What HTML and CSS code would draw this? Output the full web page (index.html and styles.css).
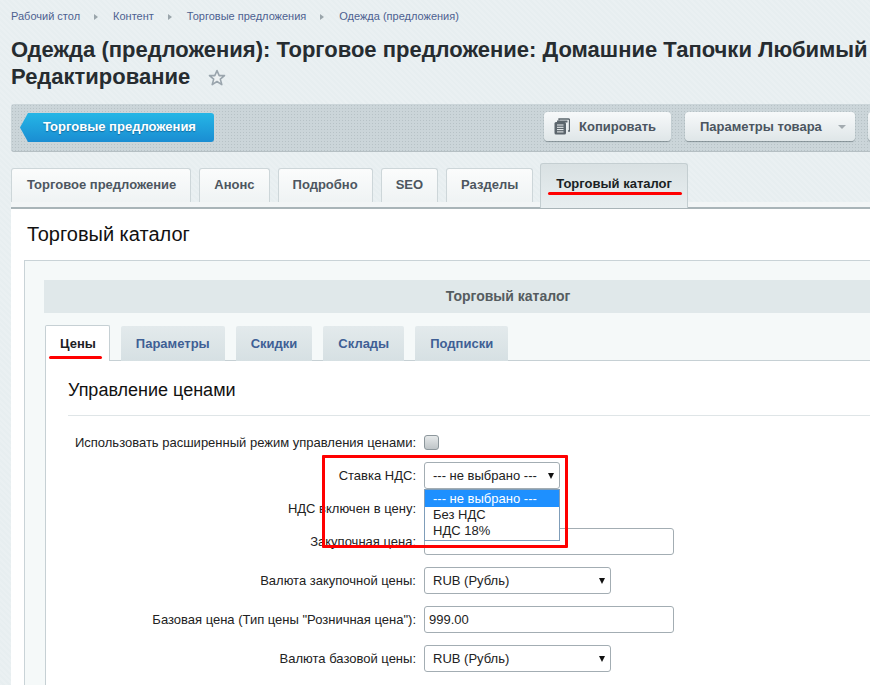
FILE: index.html
```html
<!DOCTYPE html>
<html lang="ru">
<head>
    <meta charset="UTF-8">
    <title>Одежда (предложения)</title>
    <link rel="stylesheet" href="styles.css">
</head>
<body>
    <div class="page">
        <div class="breadcrumbs">
            <a>Рабочий стол</a><i class="crumb-arrow"></i>
            <a>Контент</a><i class="crumb-arrow"></i>
            <a>Торговые предложения</a><i class="crumb-arrow"></i>
            <a>Одежда (предложения)</a>
        </div>

        <h1 class="title">
            <span class="title-line">Одежда (предложения): Торговое предложение: Домашние Тапочки Любимый</span>
            <span class="title-line">Редактирование
                <svg class="star" width="18" height="18" viewBox="0 0 18 18"><path d="M9 1.600l2.200 5h5.300l-4.200 3.500 1.500 5.500L9 12.500l-4.800 3.100 1.500-5.500L1.500 6.600h5.300z" fill="#eef2f3" stroke="#9aa5ad" stroke-width="1.600" stroke-linejoin="round"/></svg>
            </span>
        </h1>

        <div class="toolbar">
            <a class="back-btn">Торговые предложения</a>
            <a class="tool-btn copy-btn">
                <svg width="16" height="17" viewBox="0 0 16 17"><path d="M5 2.500V1h9.500a1 1 0 0 1 1 1v11h-1.500" fill="none" stroke="#5b656c" stroke-width="1.300"/><rect x="3" y="2.500" width="10.500" height="2" fill="#5b656c"/><rect x="0.500" y="4" width="11.500" height="12.500" rx="1.500" fill="#5b656c"/><path d="M3 7h6.500M3 9.300h6.500M3 11.600h6.500M3 13.900h6.500" stroke="#eef2f3" stroke-width="1"/></svg>
                Копировать
            </a>
            <a class="tool-btn params-btn">Параметры товара<i class="btn-caret"></i></a>
            <a class="tool-btn"></a>
        </div>

        <div class="tabs">
            <a class="tab tab-first">Торговое предложение</a>
            <a class="tab">Анонс</a>
            <a class="tab">Подробно</a>
            <a class="tab">SEO</a>
            <a class="tab">Разделы</a>
            <a class="tab tab-active">Торговый каталог<i class="underline"></i></a>
        </div>

        <div class="panel">
            <h2 class="panel-title">Торговый каталог</h2>
            <div class="box">
                <div class="box-head"><span>Торговый каталог</span></div>
                <div class="subtabs">
                    <a class="subtab subtab-active">Цены<i class="underline"></i></a>
                    <a class="subtab">Параметры</a>
                    <a class="subtab">Скидки</a>
                    <a class="subtab">Склады</a>
                    <a class="subtab">Подписки</a>
                </div>
                <div class="subpanel">
                    <h3 class="section-title">Управление ценами</h3>
                    <div class="form">
                        <div class="row row-tight">
                            <label>Использовать расширенный режим управления ценами:</label>
                            <span class="checkbox"></span>
                        </div>
                        <div class="row row-tight">
                            <label>Ставка НДС:</label>
                            <div class="select select-short">--- не выбрано ---<i class="select-caret"></i></div>
                            <div class="dropdown">
                                <div class="option option-on">--- не выбрано ---</div>
                                <div class="option">Без НДС</div>
                                <div class="option">НДС 18%</div>
                            </div>
                        </div>
                        <div class="row row-tight">
                            <label>НДС включен в цену:</label>
                        </div>
                        <div class="row">
                            <label>Закупочная цена:</label>
                            <div class="input"></div>
                        </div>
                        <div class="row">
                            <label>Валюта закупочной цены:</label>
                            <div class="select">RUB (Рубль)<i class="select-caret"></i></div>
                        </div>
                        <div class="row">
                            <label>Базовая цена (Тип цены "Розничная цена"):</label>
                            <div class="input">999.00</div>
                        </div>
                        <div class="row">
                            <label>Валюта базовой цены:</label>
                            <div class="select">RUB (Рубль)<i class="select-caret"></i></div>
                        </div>
                    </div>
                </div>
            </div>
        </div>

        <div class="red-frame"></div>
    </div>
</body>
</html>
```

FILE: styles.css
```css
html, body {
    margin: 0;
    height: 685px;
    overflow: hidden;
}
body {
    font-family: "Liberation Sans", Arial, sans-serif;
    background-color: #e7eef0;
    background-image: repeating-linear-gradient(45deg, rgba(255, 255, 255, 0.14) 0 2px, transparent 2px 4px);
    color: #000;
}
.page {
    position: relative;
    width: 870px;
    height: 685px;
    overflow: hidden;
}

/* breadcrumbs */
.breadcrumbs {
    display: flex;
    align-items: center;
    height: 13px;
    padding: 10px 0 0 11px;
    font-size: 11px;
    line-height: 13px;
    color: #4d6190;
}
.crumb-arrow {
    width: 0;
    height: 0;
    margin: 0 15px 0 14px;
    border-left: 4px solid #9aa5ab;
    border-top: 3.5px solid transparent;
    border-bottom: 3.5px solid transparent;
}

/* title */
.title {
    margin: 13px 0 0;
    padding-left: 11px;
    font-size: 22px;
    line-height: 27px;
    font-weight: bold;
    color: #262c30;
    white-space: nowrap;
}
.title-line {
    display: block;
}
.star {
    margin-left: 12px;
    vertical-align: -3px;
}

/* toolbar */
.toolbar {
    display: flex;
    align-items: flex-start;
    width: 1000px;
    height: 48px;
    margin: 14px 0 0 11px;
    border-radius: 3px 0 0 3px;
    border-bottom: 1px solid #b5bfc3;
    box-sizing: border-box;
    background-color: #cbd5d9;
    background-image: radial-gradient(#b7c2c6 0.7px, transparent 0.8px);
    background-size: 3px 3px;
}
.back-btn {
    width: 194px;
    height: 29px;
    margin: 9px 330px 0 9px;
    padding-left: 23px;
    box-sizing: border-box;
    font-size: 13px;
    line-height: 27px;
    font-weight: bold;
    color: #fff;
    text-shadow: 0 1px 1px rgba(0, 60, 110, 0.5);
    background: linear-gradient(#25b6e6, #1a8dd2);
    clip-path: polygon(8px 0, 100% 0, 100% 100%, 8px 100%, 0 50%);
    border-radius: 3px;
}
.tool-btn {
    display: flex;
    align-items: center;
    height: 29px;
    margin: 8px 13px 0 0;
    box-sizing: border-box;
    border-radius: 4px;
    font-size: 13px;
    font-weight: bold;
    color: #4b5560;
    background: linear-gradient(#f7f9fa, #dfe6e8);
    box-shadow: 0 1px 1px rgba(80, 95, 100, 0.55);
}
.copy-btn {
    width: 127px;
    margin-right: 14px;
    padding-left: 10px;
    gap: 9px;
}
.params-btn {
    width: 170px;
    padding-left: 15px;
    margin-right: 13px;
}
.btn-caret {
    width: 0;
    height: 0;
    margin-left: 16px;
    border-top: 4px solid #a3abb0;
    border-left: 4px solid transparent;
    border-right: 4px solid transparent;
}
.tool-btn:last-child {
    width: 60px;
}

/* main tabs */
.tabs {
    display: flex;
    align-items: flex-end;
    height: 48px;
    margin-top: 2px;
    padding-left: 11px;
    position: relative;
    z-index: 1;
}
.tab {
    position: relative;
    height: 34px;
    margin-right: 8px;
    padding: 0 14px;
    box-sizing: border-box;
    border: 1px solid #cdd6d9;
    border-bottom: none;
    border-radius: 3px 3px 0 0;
    font-size: 13px;
    line-height: 32px;
    font-weight: bold;
    color: #4d5660;
    background: linear-gradient(#fbfcfc, #eff3f4);
}
.tab-first {
    padding-left: 15px;
}
.tab-active {
    height: 45px;
    margin-left: -1px;
    margin-right: 0;
    margin-bottom: -6px;
    padding: 4px 15px 0;
    color: #1a1f24;
    background: linear-gradient(#d9e1e3, #e8eef0);
    border-color: #c4ced1;
}
.underline {
    position: absolute;
    height: 3px;
    border-radius: 2px;
    background-color: #f00;
}
.tab-active .underline {
    left: 7px;
    right: 5px;
    top: 28px;
}

/* white content area */
.panel {
    position: relative;
    margin: 0 0 0 11px;
    width: 1000px;
    height: 600px;
    padding: 0 0 0 13px;
    box-sizing: border-box;
    background-color: #fff;
    border-top: 6px solid #f2f5f6;
}
.panel::before {
    content: "";
    position: absolute;
    left: 0;
    right: 0;
    top: -1px;
    height: 2px;
    background-color: #a9b4b8;
}
.panel-title {
    margin: 0;
    padding-top: 15px;
    padding-left: 3px;
    font-size: 20px;
    line-height: 22px;
    font-weight: normal;
    color: #111;
}
.box {
    height: 500px;
    margin-top: 15px;
    padding: 19px 0 0 19px;
    background-color: #f5f9f9;
    border: 1px solid #c9d3d7;
    border-right: none;
}
.box-head {
    width: 928px;
    height: 33px;
    background-color: #e0e8ea;
    text-align: center;
    font-size: 14px;
    line-height: 33px;
    font-weight: bold;
    color: #555c60;
}

/* inner tabs */
.subtabs {
    display: flex;
    align-items: flex-end;
    height: 36px;
    margin-top: 12px;
    margin-left: 1px;
    position: relative;
    z-index: 1;
}
.subtab {
    position: relative;
    height: 35px;
    margin-right: 11px;
    padding: 0 15px;
    box-sizing: border-box;
    border-radius: 2px 2px 0 0;
    font-size: 13px;
    line-height: 35px;
    font-weight: bold;
    color: #3f5f95;
    background: linear-gradient(#e3eaec, #d6e0e3);
}
.subtab-active {
    height: 36px;
    padding: 0 13px 0 14px;
    border: 1px solid #c6d0d4;
    border-bottom: none;
    line-height: 36px;
    color: #1c2024;
    background: #fff;
}
.subtab-active .underline {
    left: 3px;
    right: 7px;
    top: 30px;
}
.subpanel {
    height: 400px;
    margin-left: 1px;
    margin-top: -1px;
    padding: 0 0 0 22px;
    background-color: #fff;
    border: 1px solid #c6d0d4;
    border-right: none;
}
.section-title {
    margin: 0;
    padding: 18px 0 14px;
    font-size: 18px;
    line-height: 22px;
    font-weight: normal;
    color: #111;
    border-bottom: 1px solid #dfe5e7;
}

/* form rows */
.form {
    padding-top: 13px;
}
.row {
    display: flex;
    align-items: center;
    position: relative;
    height: 27px;
    margin-bottom: 12px;
    font-size: 13px;
    color: #222;
}
.row-tight {
    margin-bottom: 6px;
}
.row label {
    width: 356px;
    padding-right: 8px;
    box-sizing: border-box;
    text-align: right;
    white-space: nowrap;
}
.checkbox {
    width: 15px;
    height: 15px;
    box-sizing: border-box;
    border: 1px solid #8d979c;
    border-radius: 3px;
    background: linear-gradient(#e6e9ea, #bfc5c8);
}
.input,
.select {
    height: 27px;
    box-sizing: border-box;
    border: 1px solid #a3adb3;
    border-radius: 3px;
    background-color: #fff;
    font-size: 13px;
    line-height: 25px;
    color: #222;
}
.input {
    width: 250px;
    padding-left: 4px;
}
.select {
    position: relative;
    width: 187px;
    padding-left: 8px;
}
.select-short {
    width: 136px;
}
.select-caret {
    position: absolute;
    right: 5px;
    top: 50%;
    margin-top: -3px;
    width: 0;
    height: 0;
    border-top: 6px solid #111;
    border-left: 3.5px solid transparent;
    border-right: 3.5px solid transparent;
}
.dropdown {
    position: absolute;
    left: 356px;
    top: 27px;
    width: 136px;
    height: 52px;
    box-sizing: border-box;
    border: 1px solid #7f9db9;
    background-color: #fff;
    z-index: 2;
}
.option {
    height: 16px;
    padding-left: 8px;
    font-size: 13px;
    line-height: 16px;
    color: #222;
}
.option-on {
    height: 17px;
    line-height: 17px;
    color: #fff;
    background-color: #1e90ff;
}

/* annotation */
.red-frame {
    position: absolute;
    left: 322px;
    top: 455px;
    width: 246px;
    height: 93px;
    box-sizing: border-box;
    border: 3px solid #f00;
    border-radius: 1px;
    z-index: 3;
}
```
